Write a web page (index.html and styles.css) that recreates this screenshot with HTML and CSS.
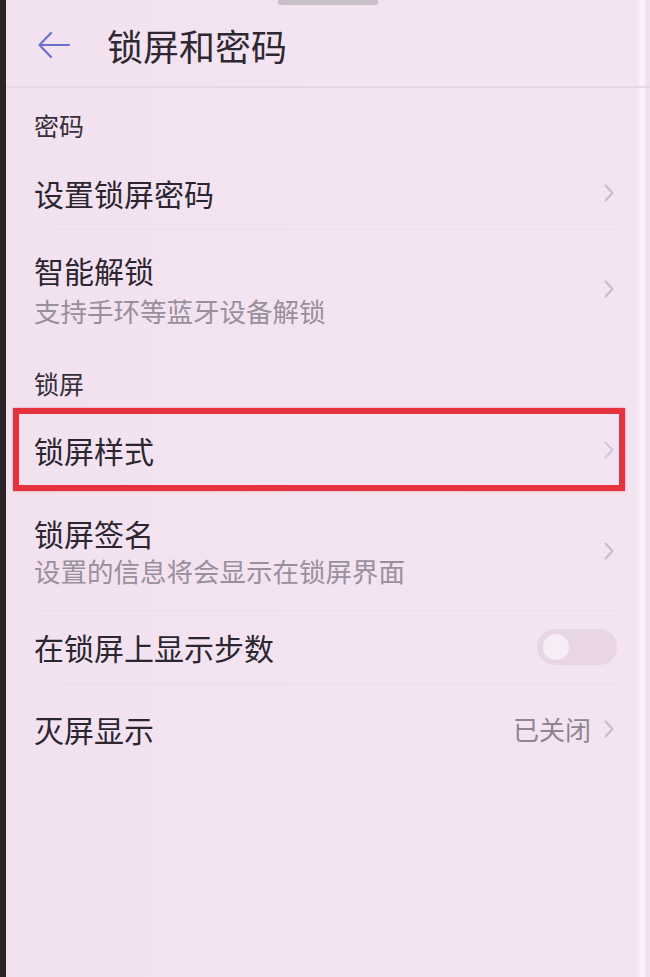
FILE: index.html
```html
<!DOCTYPE html>
<html lang="zh-CN">
<head>
<meta charset="utf-8">
<title>锁屏和密码</title>
<link rel="stylesheet" href="styles.css">
</head>
<body>
<div class="screen">
  <div class="notch"></div>
  <header class="appbar">
    <svg class="back" width="34" height="28" viewBox="0 0 34 28" aria-hidden="true">
      <path d="M32 14 H3 M14 2 L2.5 14 L14 26" fill="none" stroke="#6a72cc" stroke-width="2.2" stroke-linecap="round" stroke-linejoin="round"/>
    </svg>
    <h1 class="title">锁屏和密码</h1>
  </header>

  <main class="list">
    <div class="section-head section-first">密码</div>
    <div class="row row-single row-a">
      <span class="label">设置锁屏密码</span>
      <svg class="chev" width="10" height="18" viewBox="0 0 10 18"><path d="M1.5 1.5 L8.5 9 L1.5 16.5" fill="none" stroke="#c7bcc8" stroke-width="2" stroke-linecap="round" stroke-linejoin="round"/></svg>
    </div>
    <div class="divider"></div>
    <div class="row row-double row-b">
      <div class="texts">
        <span class="label">智能解锁</span>
        <span class="sub">支持手环等蓝牙设备解锁</span>
      </div>
      <svg class="chev" width="10" height="18" viewBox="0 0 10 18"><path d="M1.5 1.5 L8.5 9 L1.5 16.5" fill="none" stroke="#c7bcc8" stroke-width="2" stroke-linecap="round" stroke-linejoin="round"/></svg>
    </div>

    <div class="section-head section-second">锁屏</div>
    <div class="row row-single row-highlight">
      <span class="label">锁屏样式</span>
      <svg class="chev" width="10" height="18" viewBox="0 0 10 18"><path d="M1.5 1.5 L8.5 9 L1.5 16.5" fill="none" stroke="#d2c8d3" stroke-width="2" stroke-linecap="round" stroke-linejoin="round"/></svg>
    </div>
    <div class="row row-double row-c">
      <div class="texts">
        <span class="label">锁屏签名</span>
        <span class="sub">设置的信息将会显示在锁屏界面</span>
      </div>
      <svg class="chev" width="10" height="18" viewBox="0 0 10 18"><path d="M1.5 1.5 L8.5 9 L1.5 16.5" fill="none" stroke="#c7bcc8" stroke-width="2" stroke-linecap="round" stroke-linejoin="round"/></svg>
    </div>
    <div class="divider"></div>
    <div class="row row-single row-d">
      <span class="label">在锁屏上显示步数</span>
      <span class="toggle"><span class="thumb"></span></span>
    </div>
    <div class="divider divider-short"></div>
    <div class="row row-single row-e">
      <span class="label">灭屏显示</span>
      <span class="trail">
        <span class="value">已关闭</span>
        <svg class="chev" width="10" height="18" viewBox="0 0 10 18"><path d="M1.5 1.5 L8.5 9 L1.5 16.5" fill="none" stroke="#c7bcc8" stroke-width="2" stroke-linecap="round" stroke-linejoin="round"/></svg>
      </span>
    </div>
  </main>
</div>
</body>
</html>
```

FILE: styles.css
```css
* { box-sizing: border-box; }

html, body {
  margin: 0;
  padding: 0;
  background: #f3e3f1;
}

.screen {
  position: relative;
  width: 650px;
  height: 977px;
  overflow: hidden;
  border-left: 6px solid #2c2329;
  background: linear-gradient(to right, #f2e1ef 0, #f4e4f2 300px, #f4e3f1 630px, #faf2f9 635px, #faf2f9 638px, #f1e0ee 640px);
  font-family: "Noto Sans CJK SC", "Noto Sans", sans-serif;
  color: #2b2630;
  display: flex;
  flex-direction: column;
}

.notch {
  position: absolute;
  top: 0;
  left: 272px;
  width: 100px;
  height: 5px;
  background: #c9c0c8;
  border-radius: 0 0 2px 2px;
}

.appbar {
  height: 88px;
  padding: 4px 0 0 31px;
  display: flex;
  align-items: center;
  border-bottom: 2px solid #e8d7e6;
  flex-shrink: 0;
}

.back { display: block; }

.title {
  margin: 0 0 0 36px;
  font-size: 36px;
  font-weight: 400;
  line-height: 44px;
  color: #2d2832;
}

.list {
  display: flex;
  flex-direction: column;
}

.section-head {
  padding-left: 28px;
  font-size: 25px;
  line-height: 26px;
  color: #34303a;
}
.section-first { padding-top: 24px; height: 69px; }
.section-second { padding-top: 24px; height: 62px; }

.row {
  position: relative;
  display: flex;
  align-items: center;
  justify-content: space-between;
  padding: 0 36px 0 28px;
}

.label {
  font-size: 30px;
  line-height: 40px;
  color: #2b2630;
}

.texts {
  display: flex;
  flex-direction: column;
}

.sub {
  font-size: 26.5px;
  line-height: 34px;
  color: #9a8f9d;
}

.row-a { height: 72px; }
.row-b { height: 116px; padding-top: 2px; }
.row-b .sub { margin-top: 4px; }
.row-c { height: 119px; }
.row-c .sub { margin-top: 1px; }
.row-d { height: 72px; }
.row-e { height: 90px; }

.row-highlight { height: 83px; }
.row-highlight::after {
  content: "";
  position: absolute;
  left: 7px;
  right: 25px;
  top: 0;
  bottom: 0;
  border: 6px solid #e4333c;
  box-shadow: 0 0 2px rgba(228, 51, 60, 0.5);
  pointer-events: none;
}

.chev { display: block; flex-shrink: 0; }

.divider {
  height: 1px;
  margin: 0 30px 0 28px;
  background: #eddcea;
}

.toggle {
  position: relative;
  display: flex;
  align-items: center;
  width: 80px;
  height: 36px;
  margin-right: -3px;
  padding-left: 6px;
  border-radius: 18px;
  background: #e8d5e6;
  filter: blur(0.6px);
}

.thumb {
  display: block;
  width: 26px;
  height: 26px;
  border-radius: 50%;
  background: #f7edf6;
}

.trail {
  display: flex;
  align-items: center;
  gap: 13px;
}

.value {
  font-size: 26px;
  line-height: 34px;
  color: #8f8593;
}
```
